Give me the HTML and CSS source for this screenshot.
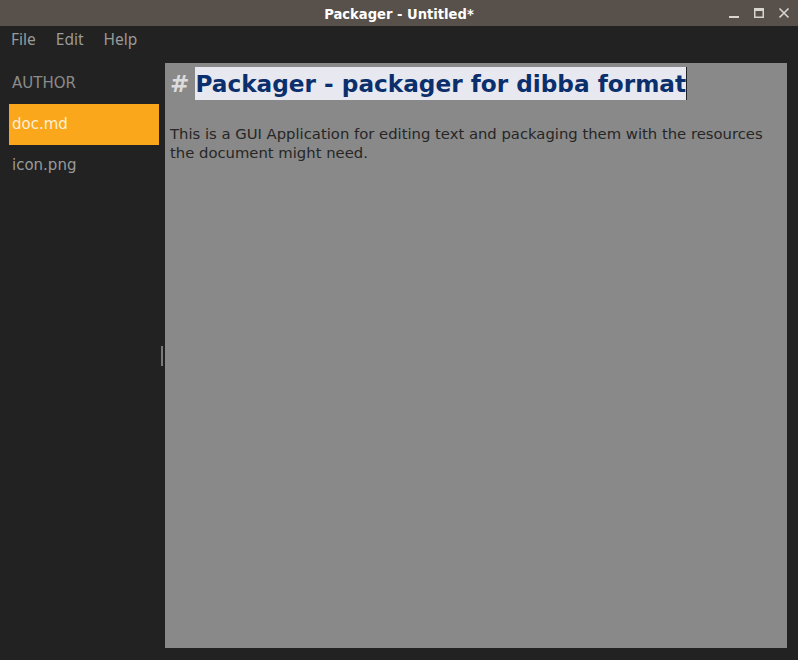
FILE: index.html
```html
<!DOCTYPE html>
<html>
<head>
<meta charset="utf-8">
<link rel="stylesheet" href="styles.css">
</head>
<body>
<div class="window">
  <div class="titlebar">
    <span class="title">Packager - Untitled*</span>
    <div class="controls">
      <svg width="12" height="12" viewBox="0 0 12 12"><rect x="1" y="9" width="10" height="2" fill="#d8d4d0"/></svg>
      <svg width="12" height="12" viewBox="0 0 12 12"><rect x="1.75" y="1.75" width="8.5" height="8.5" fill="none" stroke="#d8d4d0" stroke-width="1.5"/><rect x="1" y="1" width="10" height="3" fill="#d8d4d0"/></svg>
      <svg width="12" height="12" viewBox="0 0 12 12"><path d="M1.5 1.5 L10.5 10.5 M10.5 1.5 L1.5 10.5" stroke="#d8d4d0" stroke-width="1.6"/></svg>
    </div>
  </div>
  <div class="menubar">
    <span>File</span><span>Edit</span><span>Help</span>
  </div>
  <div class="main">
    <aside class="sidebar">
      <div class="section">AUTHOR</div>
      <div class="item selected">doc.md</div>
      <div class="item">icon.png</div>
    </aside>
    <div class="splitter"><span class="grip"></span></div>
    <div class="editor">
      <div class="h1"><span class="hash">#</span><span class="sel">Packager - packager for dibba format</span><span class="caret"></span></div>
      <p class="para">This is a GUI Application for editing text and packaging them with the resources the document might need.</p>
    </div>
  </div>
</div>
</body>
</html>
```

FILE: styles.css
```css
html, body { margin: 0; padding: 0; }
body { width: 798px; height: 660px; overflow: hidden; background: #222222; font-family: "DejaVu Sans", sans-serif; }
.window { display: flex; flex-direction: column; height: 660px; }
.titlebar { height: 26px; background: #58504a; display: flex; align-items: center; justify-content: center; position: relative; }
.title { color: #ffffff; font-family: "DejaVu Sans Condensed", "DejaVu Sans", sans-serif; font-weight: bold; font-size: 14.6px; }
.controls { position: absolute; right: 8px; top: 7px; display: flex; gap: 13px; }
.menubar { height: 26px; display: flex; align-items: center; padding-left: 11px; gap: 20px; color: #9a9a9a; font-family: "Noto Sans", sans-serif; font-size: 15.5px; padding-bottom: 1px; }
.main { flex: 1; display: flex; padding-top: 10px; padding-bottom: 12px; }
.sidebar { width: 150px; padding-left: 9px; display: flex; flex-direction: column; font-family: "DejaVu Sans", sans-serif; font-size: 15px; }
.section { height: 41px; line-height: 40px; color: #8a8a8a; padding-left: 3px; }
.item { height: 41px; line-height: 41px; padding-left: 3px; color: #9a9a9a; }
.item.selected { background: #fba71c; color: #fbefd8; }
.splitter { width: 6px; display: flex; align-items: center; justify-content: center; }
.grip { width: 2px; height: 20px; background: #7a7a7a; margin-left: -1px; }
.editor { width: 622px; background: #898989; padding: 4px 0 0 5px; box-sizing: border-box; }
.h1 { font-family: "DejaVu Sans", sans-serif; font-weight: bold; font-size: 23.2px; height: 33px; line-height: 33px; display: flex; align-items: center; white-space: pre; }
.hash { color: #dcdcdc; margin-right: 6px; }
.sel { background: #e8e8f0; color: #0b2f6c; }
.caret { width: 1px; height: 33px; background: #222; }
.para { margin: 24px 0 0 0; font-size: 14.8px; line-height: 19px; color: #262626; width: 600px; }
```
